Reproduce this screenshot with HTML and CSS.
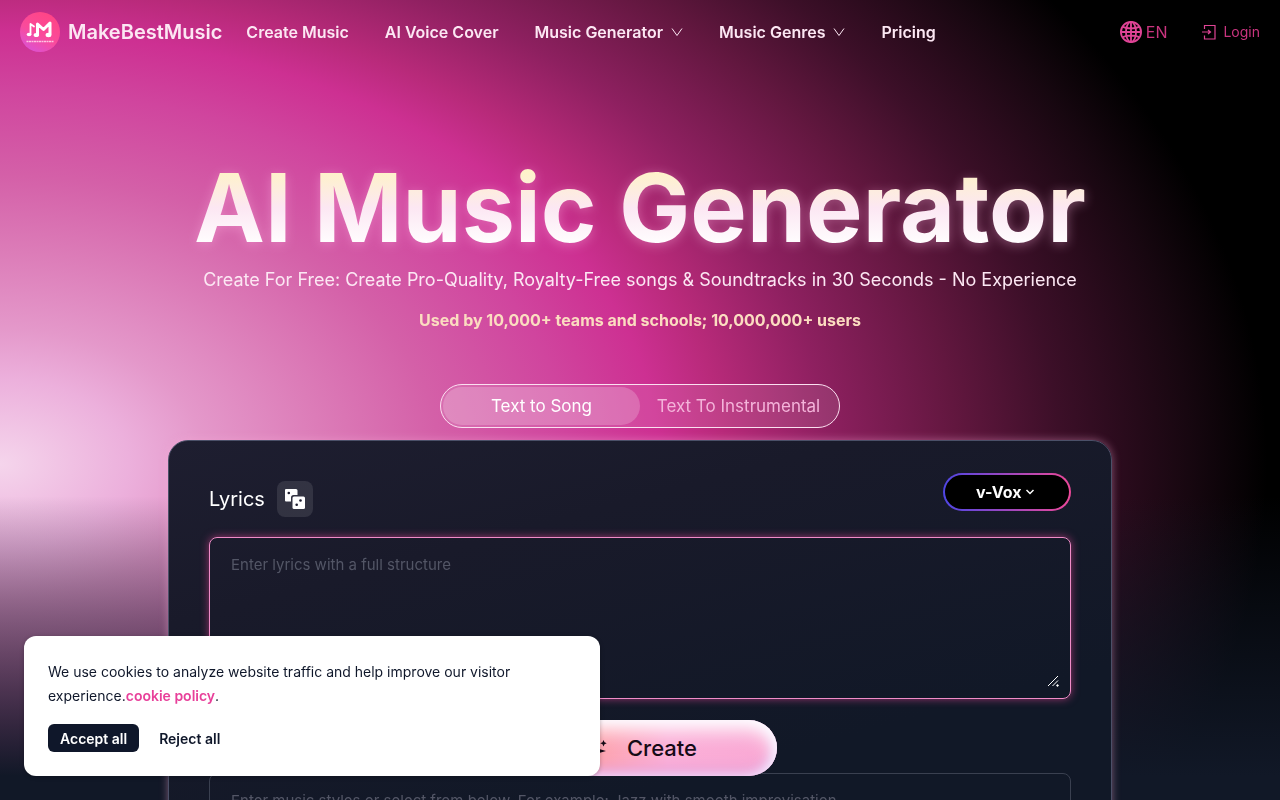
FILE: index.html
```
<!DOCTYPE html>
<html lang="en">
<head>
  <meta charset="UTF-8" />
  <meta name="viewport" content="width=device-width, initial-scale=1.0" />
  <title>AI Music Generator - MakeBestMusic</title>
  <link rel="stylesheet" href="styles.css">
</head>
<body>

  <!-- Header -->
  <header class="header">
    <a href="#" class="brand">
      <svg class="logo" viewBox="0 0 40 40" aria-hidden="true">
        <defs>
          <linearGradient id="logo-bg" x1="0.8" y1="0.1" x2="0.3" y2="1">
            <stop offset="0" stop-color="#ff4586" />
            <stop offset="0.55" stop-color="#f94b9c" />
            <stop offset="1" stop-color="#dc52d2" />
          </linearGradient>
        </defs>
        <circle cx="20" cy="20" r="20" fill="url(#logo-bg)" />
        <g fill="none" stroke="#fff" stroke-linecap="round" stroke-linejoin="round">
          <path d="M10.500 22.500V12l3.500 2.500" stroke-width="1.800" />
          <path d="M17.500 22.500V12l6 5.500L30 11v11" stroke-width="3" />
        </g>
        <g fill="#fff">
          <ellipse cx="9" cy="22.500" rx="2.300" ry="1.800" />
          <ellipse cx="16.300" cy="23" rx="2.700" ry="2.100" />
          <ellipse cx="28.500" cy="23" rx="2.900" ry="2.200" />
        </g>
        <path d="M6.500 29.500h27" stroke="#ffc4e2" stroke-width="1.600" stroke-dasharray="2 0.500" />
      </svg>
      <span>MakeBestMusic</span>
    </a>
    <nav class="nav">
      <a href="#">Create Music</a>
      <a href="#">AI Voice Cover</a>
      <button type="button">Music Generator
        <svg class="caret" viewBox="0 0 12 12"><path d="M1 2.500l5 7 5-7" /></svg>
      </button>
      <button type="button">Music Genres
        <svg class="caret" viewBox="0 0 12 12"><path d="M1 2.500l5 7 5-7" /></svg>
      </button>
      <a href="#">Pricing</a>
    </nav>
    <div class="account">
      <button type="button" class="lang">
        <svg viewBox="0 0 24 24">
          <circle cx="12" cy="12" r="11" />
          <ellipse cx="12" cy="12" rx="5.500" ry="11" />
          <path d="M12 1v22M1 12h22M3 6.500c5 2.200 13 2.200 18 0M3 17.500c5-2.200 13-2.200 18 0" />
        </svg>
        EN
      </button>
      <a href="#" class="login">
        <svg viewBox="0 0 16 16">
          <path d="M3.500 5V1.500h10.500v13.500H3.500V11.500M1 8h8M7 6l2.500 2L7 10" />
        </svg>
        Login
      </a>
    </div>
  </header>

  <!-- Hero -->
  <main class="hero">
    <h1>AI Music Generator</h1>
    <p class="lead">Create For Free: Create Pro-Quality, Royalty-Free songs &amp; Soundtracks in 30 Seconds - No Experience</p>
    <p class="trust">Used by 10,000+ teams and schools; 10,000,000+ users</p>

    <div class="tabs" role="tablist">
      <button type="button" role="tab" aria-selected="true" class="tab active">Text to Song</button>
      <button type="button" role="tab" aria-selected="false" class="tab">Text To Instrumental</button>
    </div>

    <form class="panel">
      <div class="panel-head">
        <div class="lyrics-title">
          <label for="lyrics">Lyrics</label>
          <button type="button" class="dice" aria-label="Random lyrics">
            <svg viewBox="0 0 20 20">
              <path fill="#fff" d="M1 0h10q1.500 0 1.500 1.500V6H8.500Q6 6 6 8.500v4H1Q0 12.500 0 11.500V1Q0 0 1 0z" />
              <rect x="7.500" y="7.500" width="12.500" height="12.500" rx="1.500" fill="#fff" />
              <circle cx="3.800" cy="4" r="1.300" fill="#1c1c2e" />
              <circle cx="15.500" cy="11.500" r="1.300" fill="#1c1c2e" />
              <circle cx="11.700" cy="15.800" r="1.300" fill="#1c1c2e" />
            </svg>
          </button>
        </div>
        <div class="model">
          <select aria-label="Model">
            <option>v-Vox</option>
          </select>
          <svg viewBox="0 0 10 10"><path d="M1.500 3l3.500 3.500L8.500 3" /></svg>
        </div>
      </div>

      <div class="field">
        <textarea id="lyrics" class="box box-lyrics" placeholder="Enter lyrics with a full structure"></textarea>
        <svg class="grip" viewBox="0 0 12 12"><path d="M1 11L11 1M5.500 11L11 5.500" /><circle cx="10.500" cy="10.500" r="0.800" /></svg>
      </div>
      <textarea class="box box-style" aria-label="Music style" placeholder="Enter music styles or select from below. For example: Jazz with smooth improvisation"></textarea>

      <button type="button" class="create">
        <svg viewBox="0 0 24 24">
          <path d="M12 6l2.500 6.500L23 15l-8.500 2.500L12 24l-2.500-6.500L3 15l6.500-2.500z" />
          <path d="M20.500 4l1 2.200 2.200 1-2.200 1-1 2.200-1-2.200-2.200-1 2.200-1z" />
        </svg>
        Create
      </button>
    </form>
  </main>

  <!-- Cookie banner -->
  <aside class="cookies">
    <p>We use cookies to analyze website traffic and help improve our visitor experience.<a href="#">cookie policy</a>.</p>
    <div class="cookie-actions">
      <button type="button" class="accept">Accept all</button>
      <button type="button" class="reject">Reject all</button>
    </div>
  </aside>

</body>
</html>
```
FILE: styles.css
```
* {
  box-sizing: border-box;
}

body {
  margin: 0;
  background: #111827;
  color: #fce7f3;
  font-family: Inter, "Liberation Sans", sans-serif;
  font-size: 16px;
  line-height: 24px;
}

/* pink glow behind the page */
body::before {
  content: '';
  position: fixed;
  top: 0; left: 0;
  width: 100%; height: 100vh;
  z-index: -1;
  background:
    linear-gradient(to bottom, rgba(17,24,39,0) 62%, rgba(17,24,39,0.45) 77%, #111827 97%),
    radial-gradient(101% 106% at 0 58%, #f5d5ec 0%, #ecb0dc 10%, #e498ca 16%, #dc7cb8 25%, #d460a8 34%, #d0459e 44%, #cd3092 51%, #b82a7a 56%, #8e2060 64%, #62173f 74%, #3c0f28 82%, #170710 92%, #000 98%);
}

button,
select,
textarea {
  font-family: inherit;
  color: inherit;
}

button {
  border: 0;
  padding: 0;
  background: none;
  cursor: pointer;
}

a {
  color: inherit;
  text-decoration: none;
}

.header {
  display: flex;
  align-items: center;
  height: 64px;
  padding: 0 20px;
}

.brand {
  display: flex;
  align-items: center;
  gap: 8px;
  font-size: 20px;
  font-weight: 600;
}

.logo {
  width: 40px;
  height: 40px;
}

.nav {
  display: flex;
  gap: 36px;
  margin-left: 24px;
}

.nav a,
.nav button {
  display: flex;
  align-items: center;
  gap: 8px;
  font-size: 16px;
  font-weight: 600;
  line-height: 24px;
}

.caret {
  width: 12px;
  height: 12px;
  fill: none;
  stroke: currentColor;
}

.account {
  display: flex;
  align-items: center;
  gap: 34px;
  margin-left: auto;
  color: #c9347f;
}

.account svg {
  fill: none;
  stroke: #e04496;
}

.lang,
.login {
  display: flex;
  align-items: center;
  gap: 4px;
  font-size: 16px;
}

.lang svg {
  width: 22px;
  height: 22px;
  stroke-width: 2;
}

.login {
  gap: 6px;
  font-size: 14px;
}

.login svg {
  width: 16px;
  height: 16px;
  stroke-width: 1.2;
}

.hero {
  display: flex;
  flex-direction: column;
  align-items: center;
  padding: 96px 20px 0;
  text-align: center;
}

h1 {
  margin: 0;
  font-size: 95px;
  font-weight: 700;
  line-height: 96px;
  background: linear-gradient(to bottom, #fef3c7 10%, #fce7f3 50%, #fff 90%);
  -webkit-background-clip: text;
  background-clip: text;
  color: transparent;
  filter: drop-shadow(0 2px 6px rgba(255,180,225,0.4));
}

.lead {
  margin: 10px 0 0;
  font-size: 18px;
  line-height: 28px;
}

.trust {
  margin: 14px 0 0;
  font-weight: 700;
  line-height: 24px;
  color: #fbdcc0;
}

.tabs {
  display: flex;
  width: 400px;
  max-width: 100%;
  height: 44px;
  margin-top: 52px;
  padding: 2px;
  border: 1px solid #fbe0f0;
  border-radius: 22px;
  background: rgba(255,255,255,0.1);
}

.tab {
  flex: 1;
  border-radius: 20px;
  font-size: 17px;
  color: #f4b4da;
}

.tab.active {
  background: rgba(255,255,255,0.2);
  color: #fff;
}

/* Form */
.panel {
  width: 100%;
  max-width: 944px;
  margin-top: 12px;
  padding: 32px 40px 40px;
  border: 1px solid #4b5068;
  border-radius: 20px;
  background: linear-gradient(165deg, #1e1e30 0%, #191a2a 25%, #111827 65%);
  box-shadow: 0 0 8px rgba(249,168,212,0.45);
  text-align: left;
}

.panel-head {
  display: flex;
  justify-content: space-between;
  align-items: flex-start;
}

.lyrics-title {
  display: flex;
  align-items: center;
  gap: 12px;
  padding-top: 8px;
  font-size: 20px;
  color: #fff;
}

.dice {
  display: grid;
  place-items: center;
  width: 36px;
  height: 36px;
  border-radius: 8px;
  background: rgba(255,255,255,0.1);
}

.dice svg {
  width: 20px;
  height: 20px;
}

.model {
  position: relative;
  color: #fff;
}

.model select {
  appearance: none;
  width: 128px;
  height: 38px;
  padding: 0 31px;
  border: 2px solid transparent;
  border-radius: 19px;
  background:
    linear-gradient(#000, #000) padding-box,
    linear-gradient(to right, #4f46e5, #ec4899) border-box;
  font-size: 16px;
  font-weight: 700;
}

.model svg {
  position: absolute;
  top: 14px;
  right: 36px;
  width: 10px;
  height: 10px;
  fill: none;
  stroke: currentColor;
  stroke-width: 1.5;
  pointer-events: none;
}

.field {
  position: relative;
  margin-top: 20px;
}

.box {
  display: block;
  width: 100%;
  padding: 15px 21px;
  border: 1px solid #3a4050;
  border-radius: 8px;
  background: transparent;
  font-size: 15px;
  line-height: 24px;
  resize: none;
}

.box::placeholder {
  color: #535666;
}

.box-lyrics {
  height: 162px;
  border-color: #f08cc8;
  box-shadow: 0 0 8px rgba(236,72,153,0.6);
}

.box-style {
  height: 110px;
  margin-top: 74px;
}

.grip {
  position: absolute;
  right: 12px;
  bottom: 12px;
  width: 12px;
  height: 12px;
  fill: #fff;
  stroke: #fff;
  pointer-events: none;
}

.create {
  position: fixed;
  left: 50%;
  bottom: 24px;
  transform: translateX(-50%);
  display: flex;
  align-items: center;
  justify-content: center;
  gap: 20px;
  width: 274px;
  height: 56px;
  border-radius: 28px;
  background: linear-gradient(to right, #fda4af 35%, #fbb0d8 60%, #f9a8d4);
  box-shadow: inset 0 10px 20px #fff, inset -4px 0 12px #ecdcff, inset 0 -8px 14px #e9a0d8;
  color: #150a16;
  font-size: 22px;
  font-weight: 500;
}

.create svg {
  width: 24px;
  height: 24px;
  fill: currentColor;
}

/* Cookies */
.cookies {
  position: fixed;
  left: 24px;
  bottom: 24px;
  width: 576px;
  max-width: calc(100% - 48px);
  padding: 24px;
  border-radius: 12px;
  background: #fff;
  box-shadow: 0 1px 4px rgba(0,0,0,0.25);
  color: #0f172a;
  font-size: 14px;
}

.cookies p {
  margin: 0 0 16px;
}

.cookies a {
  color: #e8409a;
  font-weight: 600;
}

.cookie-actions {
  display: flex;
  gap: 8px;
}

.cookie-actions button {
  height: 28px;
  padding: 0 12px;
  border-radius: 6px;
  font-size: 14px;
  font-weight: 600;
}

.cookie-actions .accept {
  background: #0f172a;
  color: #fff;
}
```
